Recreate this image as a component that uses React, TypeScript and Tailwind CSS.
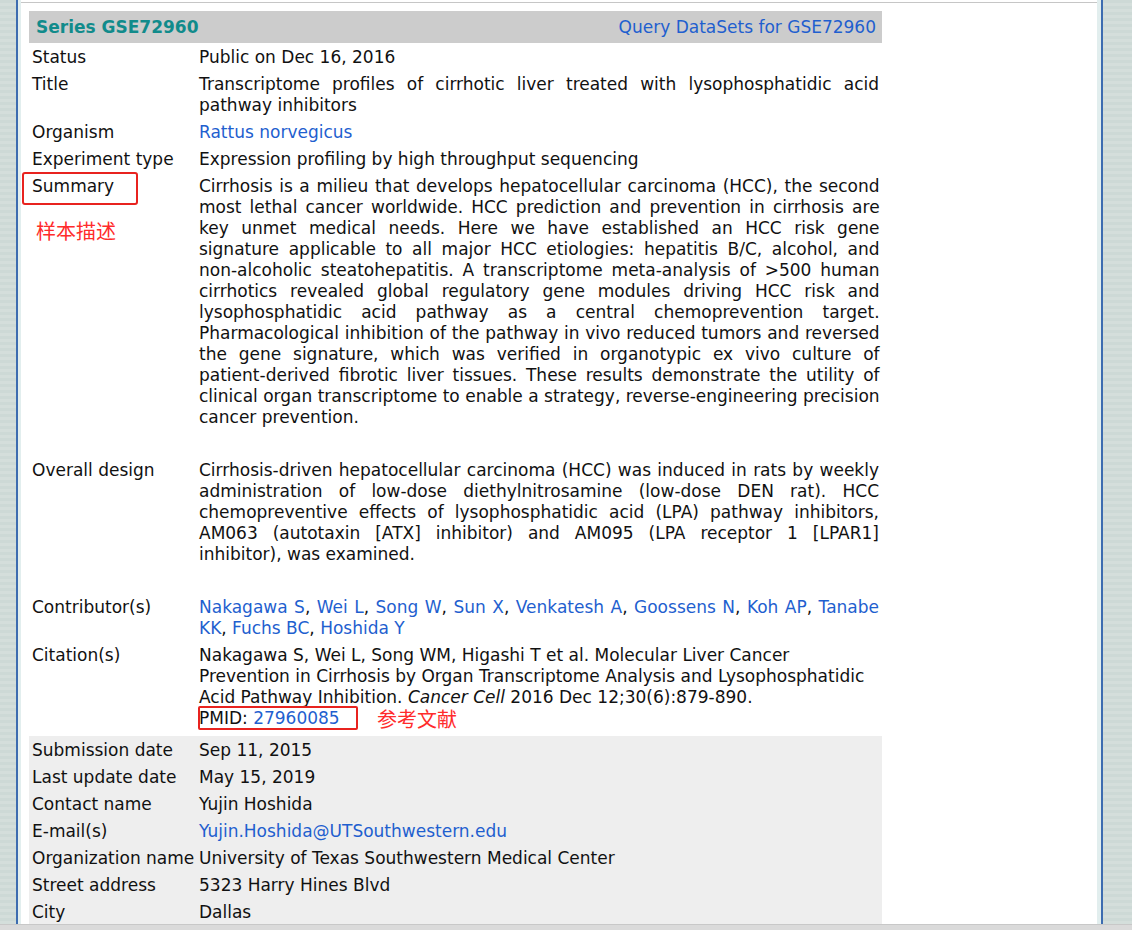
import React from "react";

const font = { fontFamily: '"DejaVu Sans", Verdana, "Noto Sans CJK SC", sans-serif' };

const summary = [
  "Cirrhosis is a milieu that develops hepatocellular carcinoma (HCC), the second",
  "most lethal cancer worldwide. HCC prediction and prevention in cirrhosis are",
  "key unmet medical needs. Here we have established an HCC risk gene",
  "signature applicable to all major HCC etiologies: hepatitis B/C, alcohol, and",
  "non-alcoholic steatohepatitis. A transcriptome meta-analysis of >500 human",
  "cirrhotics revealed global regulatory gene modules driving HCC risk and",
  "lysophosphatidic acid pathway as a central chemoprevention target.",
  "Pharmacological inhibition of the pathway in vivo reduced tumors and reversed",
  "the gene signature, which was verified in organotypic ex vivo culture of",
  "patient-derived fibrotic liver tissues. These results demonstrate the utility of",
  "clinical organ transcriptome to enable a strategy, reverse-engineering precision",
  "cancer prevention.",
];

const design = [
  "Cirrhosis-driven hepatocellular carcinoma (HCC) was induced in rats by weekly",
  "administration of low-dose diethylnitrosamine (low-dose DEN rat). HCC",
  "chemopreventive effects of lysophosphatidic acid (LPA) pathway inhibitors,",
  "AM063 (autotaxin [ATX] inhibitor) and AM095 (LPA receptor 1 [LPAR1]",
  "inhibitor), was examined.",
];

const contact: [string, string, boolean?][] = [
  ["Submission date", "Sep 11, 2015"],
  ["Last update date", "May 15, 2019"],
  ["Contact name", "Yujin Hoshida"],
  ["E-mail(s)", "Yujin.Hoshida@UTSouthwestern.edu", true],
  ["Organization name", "University of Texas Southwestern Medical Center"],
  ["Street address", "5323 Harry Hines Blvd"],
  ["City", "Dallas"],
];

// justified block with the line breaks of the reference
function Justified({ lines }: { lines: string[] }) {
  return (
    <div>
      {lines.map((l, i) => (
        <div
          key={i}
          className={
            i < lines.length - 1
              ? "whitespace-nowrap text-justify [text-align-last:justify]"
              : "whitespace-nowrap"
          }
        >
          {l}
        </div>
      ))}
    </div>
  );
}

function Row({
  label,
  children,
  gray,
  extra,
}: {
  label: string;
  children: React.ReactNode;
  gray?: boolean;
  extra?: string;
}) {
  return (
    <div className={`grid grid-cols-[167px_1fr] ${gray ? "bg-[#eeeeee]" : ""}`}>
      <div className={`px-[3px] pt-[4px] pb-[2px] whitespace-nowrap ${extra ?? ""}`}>{label}</div>
      <div className={`px-[3px] pt-[4px] pb-[2px] ${extra ?? ""}`}>{children}</div>
    </div>
  );
}

const link = "text-[#1f5fcf]";

export default function App() {
  return (
    <div
      className="relative w-[1132px] h-[930px] flex flex-col overflow-hidden bg-white text-[17px] leading-[21px] text-[#111]"
      style={font}
    >
      <div className="flex flex-1 min-h-0">
        <div className="w-[16px] bg-[repeating-linear-gradient(180deg,#cdd9d6_0px,#cdd9d6_3px,#d4dedb_3px,#d4dedb_6px)]" />
        <div className="w-[2px] bg-[#3d6cb0]" />
        <div className="w-[3px] bg-[#e2eeee]" />

        <div className="flex-1 pt-[2px]">
          <div className="h-full border-t border-[#c6c6c6] pl-[8px] pt-[8px]">
            <div className="w-[853px]">
              {/* Header */}
              <div className="h-[32px] bg-[#cccccc] flex items-center justify-between pl-[7px] pr-[6px]">
                <span className="font-bold text-[17px] text-[#118b8b]">Series GSE72960</span>
                <span className={link}>Query DataSets for GSE72960</span>
              </div>

              <Row label="Status">Public on Dec 16, 2016</Row>
              <Row label="Title">
                <Justified
                  lines={[
                    "Transcriptome profiles of cirrhotic liver treated with lysophosphatidic acid",
                    "pathway inhibitors",
                  ]}
                />
              </Row>
              <Row label="Organism">
                <span className={link}>Rattus norvegicus</span>
              </Row>
              <Row label="Experiment type">Expression profiling by high throughput sequencing</Row>
              <Row label="Summary">
                <Justified lines={summary} />
                <div className="h-[26px]" />
              </Row>
              <Row label="Overall design">
                <Justified lines={design} />
                <div className="h-[26px]" />
              </Row>
              <Row label="Contributor(s)">
                <div className="whitespace-nowrap text-justify [text-align-last:justify]">
                  <span className={link}>Nakagawa S</span>, <span className={link}>Wei L</span>,{" "}
                  <span className={link}>Song W</span>, <span className={link}>Sun X</span>,{" "}
                  <span className={link}>Venkatesh A</span>, <span className={link}>Goossens N</span>,{" "}
                  <span className={link}>Koh AP</span>, <span className={link}>Tanabe</span>
                </div>
                <div className="whitespace-nowrap">
                  <span className={link}>KK</span>, <span className={link}>Fuchs BC</span>,{" "}
                  <span className={link}>Hoshida Y</span>
                </div>
              </Row>
              <Row label="Citation(s)" extra="pb-[7px]">
                <div className="whitespace-nowrap">Nakagawa S, Wei L, Song WM, Higashi T et al. Molecular Liver Cancer</div>
                <div className="whitespace-nowrap">Prevention in Cirrhosis by Organ Transcriptome Analysis and Lysophosphatidic</div>
                <div className="whitespace-nowrap">
                  Acid Pathway Inhibition. <i>Cancer Cell</i> 2016 Dec 12;30(6):879-890.
                </div>
                <div className="inline-block whitespace-nowrap">
                  PMID: <span className={link}>27960085</span>
                </div>
              </Row>

              <div className="bg-[#eeeeee] h-[200px]">
                {contact.map(([k, v, isLink]) => (
                  <Row key={k} label={k} gray>
                    <span className={isLink ? link : ""}>{v}</span>
                  </Row>
                ))}
              </div>
            </div>
          </div>
        </div>

        <div className="w-[4px] bg-[#e2eeee]" />
        <div className="w-[2px] bg-[#3d6cb0]" />
        <div className="w-[29px] bg-[repeating-linear-gradient(180deg,#cdd9d6_0px,#cdd9d6_3px,#d4dedb_3px,#d4dedb_6px)]" />
      </div>
      <div className="h-[6px] bg-[#dadada] border-t border-[#c8c8c8]" />

      {/* annotations */}
      <div className="absolute left-[22px] top-[172px] w-[116px] h-[33px] border-2 border-[#e8231f] rounded-[3px]" />
      <div className="absolute left-[36px] top-[219px] text-[20px] leading-[24px] text-[#ff2b2b]" style={{ fontFamily: '"Noto Sans CJK SC", sans-serif' }}>
        样本描述
      </div>
      <div className="absolute left-[198px] top-[706px] w-[160px] h-[24px] border-2 border-[#e8231f] rounded-[2px]" />
      <div className="absolute left-[377px] top-[708px] text-[20px] leading-[21px] text-[#ff2b2b]" style={{ fontFamily: '"Noto Sans CJK SC", sans-serif' }}>
        参考文献
      </div>
    </div>
  );
}
